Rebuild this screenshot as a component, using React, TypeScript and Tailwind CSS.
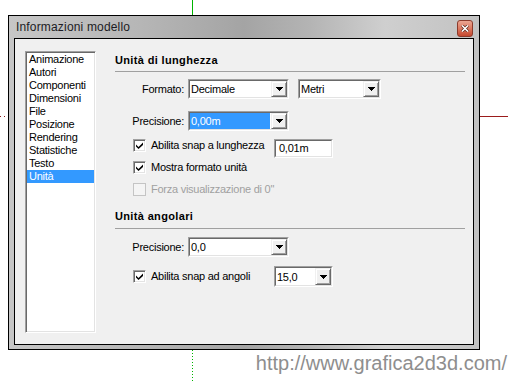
import React from "react";

const sunken =
  "border border-t-[#a0a0a0] border-l-[#a0a0a0] border-b-white border-r-white";
const sunkenInner =
  "border border-t-[#696969] border-l-[#696969] border-b-[#e3e3e3] border-r-[#e3e3e3]";

function Arrow() {
  return (
    <svg width="7" height="4" viewBox="0 0 7 4" shapeRendering="crispEdges">
      <path d="M0 0h7v1h-1v1h-1v1h-1v1h-1v-1h-1v-1h-1v-1h-1z" fill="#000" />
    </svg>
  );
}

function Combo({
  value,
  width,
  height = 20,
  selected = false,
}: {
  value: string;
  width: number;
  height?: number;
  selected?: boolean;
}) {
  return (
    <div className={`${sunken} shrink-0`} style={{ width, height }}>
      <div className={`${sunkenInner} flex h-full bg-white`}>
        <div className="flex flex-1 items-center pr-[1px]">
          <span
            className={`flex h-[16px] flex-1 items-center pl-[1px] leading-[16px] ${
              selected ? "bg-[#3399ff] text-white" : "text-black"
            }`}
          >
            {value}
          </span>
        </div>
        <div className="flex w-[16px] items-center justify-center border border-t-[#f0f0f0] border-l-[#f0f0f0] border-b-[#696969] border-r-[#696969] bg-[#f0f0f0] shadow-[inset_1px_1px_0_#ffffff,inset_-1px_-1px_0_#a0a0a0]">
          <Arrow />
        </div>
      </div>
    </div>
  );
}

function Check({ checked = true, disabled = false }: { checked?: boolean; disabled?: boolean }) {
  return (
    <div
      className={`flex h-[13px] w-[13px] shrink-0 items-center justify-center ${
        disabled
          ? "border border-[#c4c4c4] bg-[#f4f4f4]"
          : `${sunken} bg-white shadow-[inset_1px_1px_0_#696969,inset_-1px_-1px_0_#e3e3e3]`
      }`}
    >
      {checked && (
        <svg width="7" height="7" viewBox="0 0 7 7">
          <path d="M0 2.5L2.5 5L7 0.5V3L2.5 7L0 4.5Z" fill="#000" />
        </svg>
      )}
    </div>
  );
}

const items = [
  "Animazione",
  "Autori",
  "Componenti",
  "Dimensioni",
  "File",
  "Posizione",
  "Rendering",
  "Statistiche",
  "Testo",
  "Unità",
];

export default function App() {
  return (
    <div className="relative h-[381px] w-[508px] overflow-hidden bg-white font-['Liberation_Sans',Arial,sans-serif]">
      {/* guide lines of the canvas behind the dialog */}
      <div className="absolute left-[192px] top-0 h-[15px] w-px bg-[#00b400]" />
      <div className="absolute left-[192px] top-[350px] h-[31px] w-px bg-[repeating-linear-gradient(to_bottom,#00b400_0,#00b400_1px,transparent_1px,transparent_3px)]" />
      <div className="absolute left-0 top-[116px] h-px w-[8px] bg-[repeating-linear-gradient(to_right,#8b1a1a_0,#8b1a1a_1px,transparent_1px,transparent_4px)]" />
      <div className="absolute left-[480px] top-[116px] h-px w-[28px] bg-[#9b1c1c]" />

      <div className="relative ml-[8px] mt-[15px] flex h-[335px] w-[472px] flex-col border border-black bg-[linear-gradient(to_right,#c6c6c6_0%,#b6b6b6_28%,#a4a4a4_50%,#b4b4b4_64%,#cfcfcf_80%,#c2c2c2_100%)]">
        <div className="flex h-[22px] items-start justify-between pl-[7px] pr-[6px]">
          <span className="text-[12px] leading-[22px] tracking-[0.17px] text-[#1c1c24]">
            Informazioni modello
          </span>
          <div className="mt-[4px] flex h-[17px] w-[16px] items-center justify-center rounded-[3px] border border-[#8c3b2c] bg-[linear-gradient(to_bottom,#eba592_0%,#dc7a62_50%,#c5472e_100%)]">
            <svg width="8" height="7" viewBox="0 0 8 7">
              <path d="M1 0.5L7 6.5M7 0.5L1 6.5" stroke="#5a2318" strokeWidth="3" />
              <path d="M1 0.5L7 6.5M7 0.5L1 6.5" stroke="#fff" strokeWidth="1.6" />
            </svg>
          </div>
        </div>

        <div className="flex flex-1 px-[5px] pb-[4px]">
          <div className="flex flex-1 border border-black bg-[#f0f0f0] pl-[10px] pt-[12px] text-[11px] tracking-[-0.25px] text-black">
            <div
              className={`${sunken} h-[282px] w-[71px] bg-white px-[1px] pt-[1px] shadow-[inset_1px_1px_0_#696969,inset_-1px_-1px_0_#e3e3e3]`}
            >
              {items.map((it) => (
                <div
                  key={it}
                  className={`h-[13px] pl-[2px] leading-[13px] ${
                    it === "Unità" ? "bg-[#3399ff] text-white" : ""
                  }`}
                >
                  {it}
                </div>
              ))}
            </div>

            <div className="ml-[19px] flex w-[350px] flex-col">
              <div className="mt-[3px] h-[13px] font-bold leading-[13px] tracking-[0.35px]">
                Unità di lunghezza
              </div>
              <div className="mt-[4px] h-px bg-[#a0a0a0]" />

              <div className="mt-[7px] flex h-[20px] items-center">
                <span className="w-[69px] text-right">Formato:</span>
                <div className="ml-[4px]">
                  <Combo value="Decimale" width={101} />
                </div>
                <div className="ml-[9px]">
                  <Combo value="Metri" width={83} />
                </div>
              </div>

              <div className="mt-[12px] flex h-[20px] items-center">
                <span className="w-[69px] text-right">Precisione:</span>
                <div className="ml-[4px]">
                  <Combo value="0,00m" width={101} selected />
                </div>
              </div>

              <div className="mt-[8px] flex items-start pl-[18px]">
                <div className="flex h-[13px] w-[141px] items-center gap-[5px]">
                  <Check />
                  <span className="whitespace-nowrap">Abilita snap a lunghezza</span>
                </div>
                <div className={`${sunken} h-[19px] w-[59px]`}>
                  <div className={`${sunkenInner} flex h-full items-center bg-white pl-[3px]`}>
                    0,01m
                  </div>
                </div>
              </div>

              <div className="mt-[3px] flex h-[13px] items-center gap-[5px] pl-[18px]">
                <Check />
                <span>Mostra formato unità</span>
              </div>

              <div className="mt-[9px] flex h-[13px] items-center gap-[5px] pl-[18px]">
                <Check checked={false} disabled />
                <span className="text-[#a0a0a0]">Forza visualizzazione di 0"</span>
              </div>

              <div className="mt-[14px] h-[13px] font-bold leading-[13px] tracking-[0.35px]">
                Unità angolari
              </div>
              <div className="mt-[5px] h-px bg-[#a0a0a0]" />

              <div className="mt-[8px] flex h-[20px] items-center">
                <span className="w-[69px] text-right">Precisione:</span>
                <div className="ml-[4px]">
                  <Combo value="0,0" width={101} />
                </div>
              </div>

              <div className="mt-[9px] flex h-[21px] items-center pl-[18px]">
                <div className="flex h-[13px] w-[141px] items-center gap-[5px]">
                  <Check />
                  <span className="whitespace-nowrap">Abilita snap ad angoli</span>
                </div>
                <Combo value="15,0" width={59} height={21} />
              </div>
            </div>
          </div>
        </div>
      </div>

      <div className="relative mt-[1px] h-[24px] pr-[1px] text-right text-[20px] leading-[24px] text-[#8e8e8e]">
        http://www.grafica2d3d.com/
      </div>
    </div>
  );
}
